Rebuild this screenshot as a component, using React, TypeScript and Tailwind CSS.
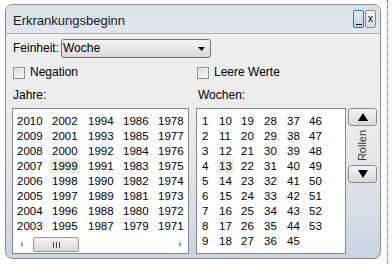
import React from "react";

const years: number[][] = [];
for (let r = 0; r < 8; r++) {
  const row: number[] = [];
  for (let c = 0; c < 5; c++) row.push(2010 - r - c * 8);
  years.push(row);
}

const weeks: (number | null)[][] = [];
for (let r = 0; r < 9; r++) {
  const row: (number | null)[] = [];
  for (let c = 0; c < 6; c++) {
    const w = 1 + r + c * 9;
    row.push(w <= 53 ? w : null);
  }
  weeks.push(row);
}

function Checkbox({ label }: { label: string }) {
  return (
    <label className="flex items-center gap-[5px] leading-[15px]">
      <span className="h-[12px] w-[12px] border border-[#8f8f8f] bg-gradient-to-br from-[#d8d8d8] to-[#fafafa] shadow-[inset_0_0_0_1px_#f2f2f2]" />
      <span>{label}</span>
    </label>
  );
}

function ScrollButton({ down }: { down?: boolean }) {
  return (
    <div className="flex h-[18px] w-[29px] items-center justify-center rounded-[3px] border border-[#8d8d8d] bg-gradient-to-b from-[#f4f4f4] to-[#d8d8d8]">
      <svg width="10" height="8" viewBox="0 0 10 8">
        {down ? (
          <polygon points="0,0 10,0 5,8" fill="#000" />
        ) : (
          <polygon points="0,8 10,8 5,0" fill="#000" />
        )}
      </svg>
    </div>
  );
}

export default function App() {
  return (
    <div
      className="flex h-[264px] w-[392px] bg-white text-[12px] leading-[15px] text-black"
      style={{ fontFamily: '"Liberation Sans", Arial, sans-serif' }}
    >
      <div className="ml-[5px] mt-[4px] flex h-[255px] w-[376px] flex-col overflow-hidden rounded-[7px] border border-[#8c8c8c] bg-gradient-to-b from-[#f0f0f0] via-[#ebebeb] to-[#cad5e3]">
        {/* title bar */}
        <div className="flex h-[29px] shrink-0 items-center justify-between border-b border-[#a9b4c2] bg-gradient-to-b from-[#d6dfea] to-[#e2e8ef] pl-[7px] pr-[4px]">
          <span className="pt-[2px] text-[13px] text-[#1a1a1a]">Erkrankungsbeginn</span>
          <div className="flex items-center gap-[1px]">
            <div className="flex h-[18px] w-[11px] items-end justify-center rounded-[2px] border border-[#3b78a8] bg-gradient-to-b from-[#e2f0fb] to-[#b4d2ec] pb-[2px]">
              <span className="h-[1px] w-[6px] bg-black" />
            </div>
            <div className="flex h-[18px] w-[11px] items-center justify-center rounded-[2px] border border-[#8a8a8a] bg-gradient-to-b from-[#f4f4f4] to-[#d9d9d9] text-[10px] leading-none">
              x
            </div>
          </div>
        </div>

        {/* body */}
        <div className="flex flex-col pl-[6px] pt-[5px]">
          <div className="flex items-center">
            <span className="w-[49px] pl-[1px]">Feinheit:</span>
            <div className="flex h-[19px] w-[150px] items-center justify-between rounded-[3px] border border-[#707070] bg-gradient-to-b from-[#f5f5f5] to-[#dadada] pl-[1px] pr-[5px]">
              <span>Woche</span>
              <svg width="7" height="4" viewBox="0 0 7 4">
                <polygon points="0,0 7,0 3.5,4" fill="#000" />
              </svg>
            </div>
          </div>

          <div className="mt-[7px] flex">
            <div className="w-[185px] pl-[1px]">
              <Checkbox label="Negation" />
            </div>
            <Checkbox label="Leere Werte" />
          </div>

          <div className="mt-[8px] flex">
            <div className="w-[185px] pl-[1px]">Jahre:</div>
            <div className="pl-[1px]">Wochen:</div>
          </div>

          <div className="mt-[5px] flex text-[11.5px]">
            <div className="flex h-[146px] w-[177px] flex-col border border-[#828790] bg-white">
              <div className="grid flex-1 grid-cols-[35px_36px_35px_35px_35px] content-start pl-[4px] pt-[5px]">
                {years.map((row) =>
                  row.map((y) => (
                    <div key={y} className="h-[15px] leading-[15px]">
                      <span className={y === 1999 ? "-mx-[2px] bg-[#edebdf] px-[2px] py-[1px]" : ""}>{y}</span>
                    </div>
                  ))
                )}
              </div>
              <div className="flex h-[17px] items-center">
                <div className="flex w-[17px] justify-center">
                  <svg width="6" height="7" viewBox="0 0 6 7">
                    <polygon points="1,3.5 4,0.5 4,6.5" fill="#a0a0a0" />
                  </svg>
                </div>
                <div className="ml-[3px] flex h-[15px] w-[46px] items-center justify-center rounded-[2px] border border-[#979797] bg-gradient-to-b from-[#f4f4f4] to-[#d9d9d9]">
                  <div className="flex gap-[2px]">
                    <span className="h-[6px] w-[1px] bg-[#4a4a4a]" />
                    <span className="h-[6px] w-[1px] bg-[#4a4a4a]" />
                    <span className="h-[6px] w-[1px] bg-[#4a4a4a]" />
                  </div>
                </div>
                <div className="flex-1" />
                <div className="flex w-[17px] justify-center">
                  <svg width="6" height="7" viewBox="0 0 6 7">
                    <polygon points="5,3.5 2,0.5 2,6.5" fill="#a0a0a0" />
                  </svg>
                </div>
              </div>
            </div>

            <div className="ml-[7px] h-[146px] w-[150px] border border-[#828790] bg-white pl-[5px] pt-[5px]">
              <div className="grid grid-cols-[17px_22px_23px_23px_22px_22px]">
                {weeks.map((row, r) =>
                  row.map((w, c) => (
                    <div key={r * 6 + c} className="h-[15px] leading-[15px]">
                      {w !== null && (
                        <span className={w === 13 ? "-mx-[2px] bg-[#edebdf] px-[2px] py-[1px]" : ""}>{w}</span>
                      )}
                    </div>
                  ))
                )}
              </div>
            </div>

            <div className="ml-[2px] flex w-[29px] flex-col items-center">
              <ScrollButton />
              <div className="flex h-[39px] w-[29px] items-center justify-center">
                <span className="-rotate-90 text-[11px] text-[#3a3a3a]">Rollen</span>
              </div>
              <ScrollButton down />
            </div>
          </div>
        </div>
      </div>
      <div className="ml-[6px] h-full border-l border-dotted border-[#555]" />
    </div>
  );
}
